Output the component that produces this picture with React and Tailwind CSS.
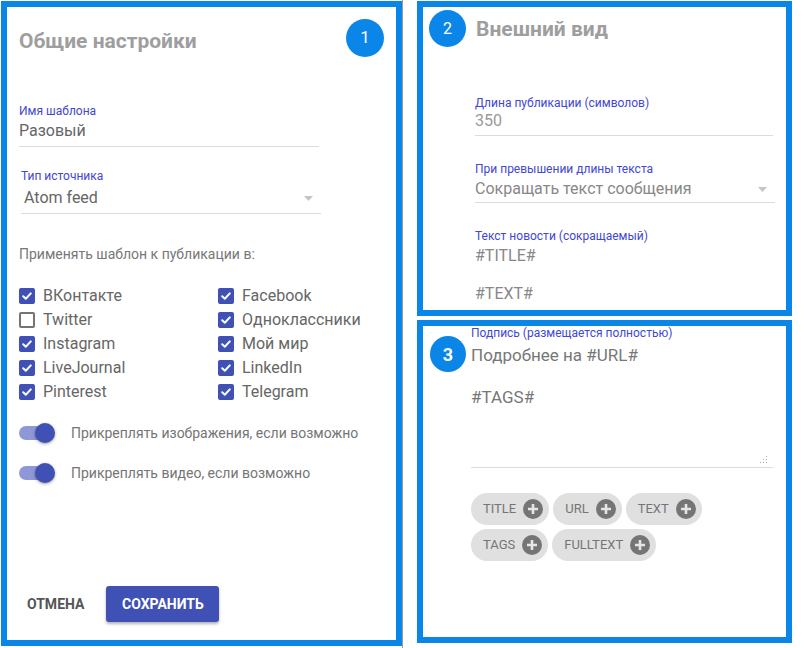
import { useState } from 'react';

const BLUE = 'border-[#0a86e8]';

function Badge({ n, className = '' }) {
    return (
        <div className={`flex shrink-0 items-center justify-center rounded-full bg-[#0a86e8] text-white ${className}`}>
            {n}
        </div>
    );
}

function Label({ children, className = '' }) {
    return <div className={`text-[12px] leading-[14px] text-[#3f47d6] ${className}`}>{children}</div>;
}

function Arrow() {
    return (
        <svg width="9" height="5" viewBox="0 0 9 5" className="shrink-0">
            <polygon points="0,0 9,0 4.5,5" fill="#c4c4c4" />
        </svg>
    );
}

function Checkbox({ checked }) {
    if (!checked) {
        return <div className="h-4 w-4 shrink-0 rounded-[2px] border-2 border-[#757575]" />;
    }
    return (
        <div className="flex h-4 w-4 shrink-0 items-center justify-center rounded-[2px] bg-[#3f51b5]">
            <svg width="12" height="12" viewBox="0 0 12 12">
                <path d="M2.2 6.3l2.6 2.5 5-5.4" fill="none" stroke="#fff" strokeWidth="2" strokeLinecap="round" strokeLinejoin="round" />
            </svg>
        </div>
    );
}

function Toggle({ label }) {
    return (
        <div className="flex h-6 items-center">
            <div className="relative h-5 w-[36px] shrink-0">
                {/* track */}
                <div className="absolute left-0 top-[3px] h-[14px] w-[34px] rounded-full bg-[#8f98d6]" />
                {/* thumb */}
                <div className="absolute right-0 top-0 h-5 w-5 rounded-full bg-[#3f51b5] shadow-[0_1px_3px_rgba(0,0,0,0.4)]" />
            </div>
            <span className="ml-4 text-[14px] text-[#757575]">{label}</span>
        </div>
    );
}

function Chip({ label }) {
    return (
        <div className="flex h-8 items-center gap-[7px] rounded-full bg-[#e0e0e0] pl-3 pr-[6px] text-[13px] text-[#757575]">
            <span>{label}</span>
            <svg width="20" height="20" viewBox="0 0 20 20">
                <circle cx="10" cy="10" r="10" fill="#757575" />
                <path d="M10 5v10M5 10h10" stroke="#e6e6e6" strokeWidth="2.6" />
            </svg>
        </div>
    );
}

const networks = [
    ['ВКонтакте', true, 'Facebook', true],
    ['Twitter', false, 'Одноклассники', true],
    ['Instagram', true, 'Мой мир', true],
    ['LiveJournal', true, 'LinkedIn', true],
    ['Pinterest', true, 'Telegram', true],
];

function GeneralPanel() {
    return (
        <div className={`flex h-[645px] w-[401px] shrink-0 flex-col border-[6px] ${BLUE}`}>
            {/* header */}
            <div className="flex items-start justify-between px-3 pt-3">
                <h2 className="mt-[10px] text-[21px] font-bold leading-6 text-[#9e9e9e]">Общие настройки</h2>
                <Badge n="1" className="h-[38px] w-[38px] text-[17px]" />
            </div>

            <div className="flex flex-col pl-3">
                {/* template name */}
                <div className="mt-[47px] w-[300px] border-b border-[#dcdcdc] pb-[5px]">
                    <Label>Имя шаблона</Label>
                    <div className="mt-[3px] text-[16px] leading-5 text-[#666]">Разовый</div>
                </div>

                {/* source type */}
                <div className="ml-[2px] mt-[22px] w-[300px] border-b border-[#dcdcdc] pb-[5px]">
                    <Label>Тип источника</Label>
                    <div className="mt-[5px] flex items-center justify-between pl-[3px] pr-[8px]">
                        <span className="text-[16px] leading-5 text-[#666]">Atom feed</span>
                        <Arrow />
                    </div>
                </div>

                <div className="mt-[30px] text-[14px] leading-5 text-[#777]">Применять шаблон к публикации в:</div>

                {/* networks */}
                <div className="mt-[20px] grid w-[398px] grid-cols-[199px_199px]">
                    {networks.map(([a, ca, b, cb]) => (
                        <div key={a} className="contents">
                            <div className="flex h-6 items-center">
                                <Checkbox checked={ca} />
                                <span className="ml-2 text-[16px] text-[#666]">{a}</span>
                            </div>
                            <div className="flex h-6 items-center">
                                <Checkbox checked={cb} />
                                <span className="ml-2 text-[16px] text-[#666]">{b}</span>
                            </div>
                        </div>
                    ))}
                </div>

                <div className="mt-[17px] flex flex-col gap-[16px]">
                    <Toggle label="Прикреплять изображения, если возможно" />
                    <Toggle label="Прикреплять видео, если возможно" />
                </div>
            </div>

            {/* actions */}
            <div className="mt-auto flex items-center gap-[14px] pb-[18px] pl-3">
                <button className="px-2 text-[14px] font-bold text-[#555]">ОТМЕНА</button>
                <button className="h-9 w-[113px] rounded-[3px] bg-[#3f51b5] text-[14px] font-bold text-white shadow-[0_2px_3px_rgba(0,0,0,0.3)]">
                    СОХРАНИТЬ
                </button>
            </div>
        </div>
    );
}

function AppearancePanel() {
    return (
        <div className={`h-[315px] w-[375px] border-[6px] ${BLUE}`}>
            <div className="flex items-center pl-[6px] pt-[3px]">
                <Badge n="2" className="h-[37px] w-[37px] text-[16px]" />
                <h2 className="ml-[10px] text-[21px] font-bold leading-6 text-[#9e9e9e]">Внешний вид</h2>
            </div>

            <div className="flex flex-col pl-[52px]">
                <div className="mt-[49px] w-[298px] border-b border-[#dcdcdc] pb-[4px]">
                    <Label>Длина публикации (символов)</Label>
                    <div className="mt-px text-[16px] leading-5 text-[#999]">350</div>
                </div>

                <div className="mt-[26px] w-[300px] border-b border-[#dcdcdc] pb-[3px]">
                    <Label>При превышении длины текста</Label>
                    <div className="mt-[3px] flex items-center justify-between pr-[8px]">
                        <span className="text-[16px] leading-5 text-[#888]">Сокращать текст сообщения</span>
                        <Arrow />
                    </div>
                </div>

                <div className="mt-[26px]">
                    <Label>Текст новости (сокращаемый)</Label>
                    <div className="mt-[3px] whitespace-pre-line text-[16px] leading-[19px] text-[#888]">
                        {'#TITLE#\n\n#TEXT#'}
                    </div>
                </div>
            </div>
        </div>
    );
}

function SignaturePanel() {
    const [tags] = useState(['TITLE', 'URL', 'TEXT', 'TAGS', 'FULLTEXT']);
    return (
        <div className={`flex h-[323px] w-[375px] border-[6px] ${BLUE}`}>
            <Badge n="3" className="ml-[7px] mt-[10px] h-9 w-9 text-[18px] font-bold" />
            <div className="ml-[5px] flex w-[302px] flex-col">
                <Label>Подпись (размещается полностью)</Label>
                <div className="relative mt-[5px] h-[123px] border-b border-[#dcdcdc]">
                    <div className="whitespace-pre-line text-[17px] leading-[21px] text-[#777]">
                        {'Подробнее на #URL#\n\n#TAGS#'}
                    </div>
                    {/* resize grip */}
                    <svg width="8" height="8" viewBox="0 0 8 8" className="absolute bottom-[3px] right-[5px]">
                        <rect x="6" y="0" width="1" height="1" fill="#aaa" />
                        <rect x="6" y="3" width="1" height="1" fill="#aaa" />
                        <rect x="3" y="3" width="1" height="1" fill="#aaa" />
                        <rect x="6" y="6" width="1" height="1" fill="#aaa" />
                        <rect x="3" y="6" width="1" height="1" fill="#aaa" />
                        <rect x="0" y="6" width="1" height="1" fill="#aaa" />
                    </svg>
                </div>
                <div className="mt-[25px] flex w-[240px] flex-wrap gap-x-1 gap-y-1">
                    {tags.map(t => <Chip key={t} label={t} />)}
                </div>
            </div>
        </div>
    );
}

export default function App() {
    return (
        <div className="flex h-[648px] w-[805px] overflow-hidden bg-white pl-px pt-px font-['Roboto',sans-serif]">
            <GeneralPanel />
            <div className="-mt-px h-[648px] w-px shrink-0 bg-[#9a9a9a]" />
            <div className="ml-[14px] flex flex-col gap-1">
                <AppearancePanel />
                <SignaturePanel />
            </div>
        </div>
    );
}
